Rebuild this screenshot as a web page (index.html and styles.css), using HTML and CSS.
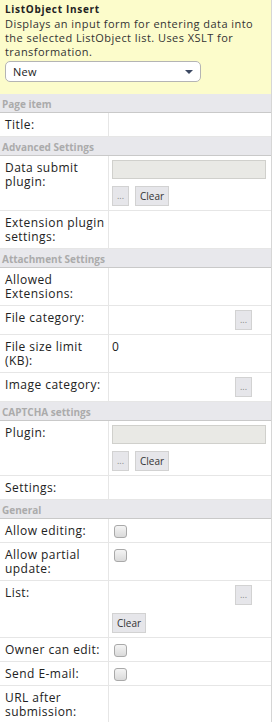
FILE: index.html
```html
<!DOCTYPE html>
<html>
<head>
<meta charset="utf-8">
<link rel="stylesheet" href="styles.css">
</head>
<body>
<div class="panel">
  <div class="info">
    <div class="info-title">ListObject Insert</div>
    <div class="info-desc">Displays an input form for entering data into<br>the selected ListObject list. Uses XSLT for<br>transformation.</div>
    <div class="select"><span class="select-text">New</span><span class="caret"></span></div>
  </div>
  <div class="form">
    <div class="cat">Page item</div>
    <div class="row"><div class="lbl">Title:</div><div class="val"></div></div>

    <div class="cat">Advanced Settings</div>
    <div class="row"><div class="lbl">Data submit plugin:</div><div class="val"><div class="txt"></div><div class="btns"><span class="btn dots">...</span><span class="btn">Clear</span></div></div></div>
    <div class="row"><div class="lbl">Extension plugin settings:</div><div class="val"></div></div>

    <div class="cat">Attachment Settings</div>
    <div class="row"><div class="lbl">Allowed Extensions:</div><div class="val"></div></div>
    <div class="row"><div class="lbl">File category:</div><div class="val end"><span class="btn dots">...</span></div></div>
    <div class="row"><div class="lbl">File size limit (KB):</div><div class="val num">0</div></div>
    <div class="row"><div class="lbl">Image category:</div><div class="val end"><span class="btn dots">...</span></div></div>

    <div class="cat">CAPTCHA settings</div>
    <div class="row"><div class="lbl">Plugin:</div><div class="val"><div class="txt"></div><div class="btns"><span class="btn dots">...</span><span class="btn">Clear</span></div></div></div>
    <div class="row"><div class="lbl">Settings:</div><div class="val"></div></div>

    <div class="cat">General</div>
    <div class="row"><div class="lbl">Allow editing:</div><div class="val"><span class="chk"></span></div></div>
    <div class="row"><div class="lbl">Allow partial update:</div><div class="val"><span class="chk"></span></div></div>
    <div class="row"><div class="lbl">List:</div><div class="val stack"><span class="btn dots right">...</span><span class="btn">Clear</span></div></div>
    <div class="row"><div class="lbl">Owner can edit:</div><div class="val"><span class="chk"></span></div></div>
    <div class="row"><div class="lbl">Send E-mail:</div><div class="val"><span class="chk"></span></div></div>
    <div class="row last"><div class="lbl">URL after submission:</div><div class="val"></div></div>
  </div>
</div>
</body>
</html>
```
FILE: styles.css
```css
html, body {
  margin: 0;
  padding: 0;
  background: #ffffff;
}
body {
  font-family: "Open Sans", "Liberation Sans", sans-serif;
  color: #222;
}
.panel {
  width: 271px;
  border-right: 1px solid #d6d6d6;
  border-bottom: 1px solid #d6d6d6;
}
.info {
  background: #fcfccb;
  padding: 2px 5px 12px 5px;
}
.info-title {
  font-weight: 700;
  font-size: 10px;
  line-height: 14px;
  letter-spacing: 0.7px;
  color: #222;
}
.info-desc {
  margin-top: 1px;
  font-size: 11px;
  line-height: 14px;
  letter-spacing: 0.45px;
  white-space: nowrap;
  color: #333;
}
.select {
  margin-top: 2px;
  height: 19px;
  border: 1px solid #b4b4b4;
  border-radius: 5px;
  background: #fff;
  display: flex;
  align-items: center;
  justify-content: space-between;
  padding: 0 7px 0 7px;
  width: 180px;
}
.select-text {
  font-size: 11px;
  letter-spacing: 0.3px;
  color: #222;
}
.caret {
  width: 0;
  height: 0;
  border-left: 4px solid transparent;
  border-right: 4px solid transparent;
  border-top: 4px solid #3c4862;
}
.cat {
  background: #e8e8ec;
  border-bottom: 1px solid #c9c9c9;
  height: 16px;
  padding-top: 2px;
  line-height: 17px;
  padding-left: 2px;
  font-size: 10px;
  font-weight: 700;
  color: #ababab;
}
.row {
  display: grid;
  grid-template-columns: 109px 1fr;
  border-bottom: 1px solid #e6e6e6;
}
.row.last {
  border-bottom: none;
}
.lbl {
  border-right: 1px solid #e6e6e6;
  padding: 5px 3px 4px 5px;
  font-size: 12px;
  line-height: 14px;
  letter-spacing: 0.45px;
  color: #222;
}
.val {
  padding: 4px 3px;
  font-size: 12px;
  line-height: 14px;
}
.val.num {
  padding-top: 5px;
  color: #222;
}
.val.end {
  display: flex;
  justify-content: flex-end;
  padding-right: 19px;
}
.val.stack {
  display: flex;
  flex-direction: column;
  align-items: flex-start;
  gap: 8px;
}
.val.stack .right {
  align-self: flex-end;
  margin-right: 16px;
}
.txt {
  width: 152px;
  height: 17px;
  border: 1px solid #d0d0cc;
  background: #e9e9e5;
}
.btns {
  display: flex;
  gap: 6px;
  margin-top: 7px;
}
.btn {
  display: inline-flex;
  align-items: center;
  justify-content: center;
  height: 18px;
  padding: 0 4px;
  border: 1px solid #d2d2d2;
  background: #e6e6ea;
  font-size: 10px;
  color: #333;
  box-sizing: content-box;
}
.btn.dots {
  width: 15px;
  padding: 0;
  color: #888;
  font-size: 9px;
}
.chk {
  display: block;
  margin: 2px 0 0 2px;
  width: 11px;
  height: 11px;
  border: 1px solid #a9a9a9;
  border-radius: 3px;
  background: linear-gradient(#f4f4f4, #dadada);
}
```
